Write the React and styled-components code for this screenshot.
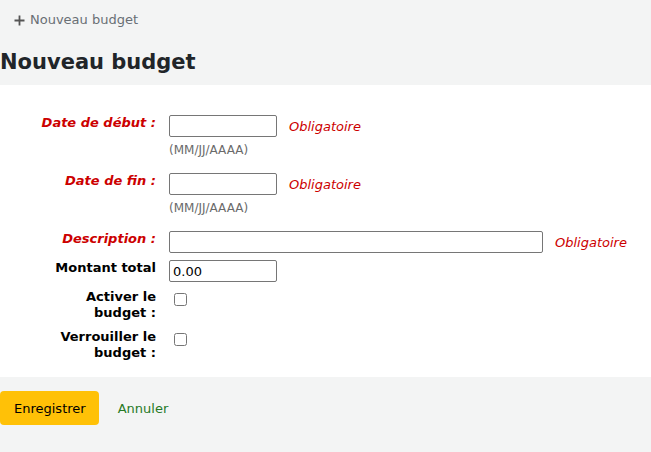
import React from "react";
import styled, { createGlobalStyle } from "styled-components";

const Global = createGlobalStyle`
  html, body { margin: 0; padding: 0; background: #f3f4f4; }
  body { font-family: "DejaVu Sans", "Liberation Sans", sans-serif; font-size: 13px; color: #000; }
`;

const Page = styled.div`
  width: 651px;
  min-height: 452px;
  background: #f3f4f4;
`;

const Toolbar = styled.div`
  display: flex;
  align-items: center;
  height: 38px;
  padding-left: 14px;
  padding-top: 1px;
`;

const ToolLink = styled.a`
  display: inline-flex;
  align-items: center;
  gap: 5px;
  color: #696f75;
  font-size: 13px;
  text-decoration: none;
  line-height: 16px;
`;

const Heading = styled.h1`
  margin: 0;
  padding: 10px 0 9px 0;
  font-size: 21px;
  line-height: 27px;
  font-weight: bold;
  color: #212529;
`;

const Panel = styled.div`
  background: #fff;
  padding: 30px 0 16px 0;
`;

const Row = styled.div`
  display: flex;
  align-items: flex-start;
  margin-bottom: ${(p) => p.$gap ?? 7}px;
  &:last-child { margin-bottom: 0; }
`;

const Label = styled.label`
  flex: none;
  width: 130px;
  margin-left: 26px;
  padding-right: 13px;
  text-align: right;
  font-weight: bold;
  line-height: 16px;
  color: ${(p) => (p.$required ? "#cc0000" : "#000")};
  font-style: ${(p) => (p.$required ? "italic" : "normal")};
`;

const Field = styled.div`
  display: flex;
  flex-direction: column;
`;

const Line = styled.div`
  display: flex;
  align-items: center;
`;

const Input = styled.input`
  box-sizing: border-box;
  width: ${(p) => p.$w}px;
  height: 22px;
  margin: 0;
  padding: 1px 3px;
  border: 1px solid #767676;
  border-radius: 2px;
  font-family: "DejaVu Sans", sans-serif;
  font-size: 13px;
  color: #000;
  background: #fff;
`;

const Required = styled.span`
  margin-left: 12px;
  color: #cc0000;
  font-style: italic;
  font-size: 13px;
`;

const Hint = styled.div`
  padding: 5px 0 8px 0;
  line-height: 16px;
  font-size: 12px;
  color: #6a6a6a;
`;

const Check = styled.input`
  flex: none;
  width: 13px;
  height: 13px;
  margin: 4px 0 0 5px;
`;

const Actions = styled.div`
  display: flex;
  align-items: center;
  gap: 19px;
  padding-top: 14px;
`;

const SaveButton = styled.button`
  height: 34px;
  padding: 0 13px 0 14px;
  border: none;
  border-radius: 4px;
  background: #ffc107;
  color: #000;
  font-family: "DejaVu Sans", sans-serif;
  font-size: 13px;
`;

const CancelLink = styled.a`
  color: #267a26;
  font-size: 13px;
  text-decoration: none;
`;

const Plus = () => (
  <svg width="11" height="11" viewBox="0 0 11 11">
    <path d="M5.5 0.5v10M0.5 5.5h10" stroke="#555" strokeWidth="1.8" fill="none" />
  </svg>
);

export default function App() {
  return (
    <Page>
      <Global />
      <Toolbar>
        <ToolLink href="#">
          <Plus />
          Nouveau budget
        </ToolLink>
      </Toolbar>
      <Heading>Nouveau budget</Heading>
      <Panel>
        <Row>
          <Label $required>Date de début&nbsp;:</Label>
          <Field>
            <Line>
              <Input $w={108} />
              <Required>Obligatoire</Required>
            </Line>
            <Hint>(MM/JJ/AAAA)</Hint>
          </Field>
        </Row>
        <Row>
          <Label $required>Date de fin&nbsp;:</Label>
          <Field>
            <Line>
              <Input $w={108} />
              <Required>Obligatoire</Required>
            </Line>
            <Hint>(MM/JJ/AAAA)</Hint>
          </Field>
        </Row>
        <Row>
          <Label $required>Description&nbsp;:</Label>
          <Field>
            <Line>
              <Input $w={374} />
              <Required>Obligatoire</Required>
            </Line>
          </Field>
        </Row>
        <Row>
          <Label>Montant total</Label>
          <Field>
            <Line>
              <Input $w={108} defaultValue="0.00" />
            </Line>
          </Field>
        </Row>
        <Row $gap={8}>
          <Label>Activer le budget&nbsp;:</Label>
          <Check type="checkbox" />
        </Row>
        <Row>
          <Label>Verrouiller le budget&nbsp;:</Label>
          <Check type="checkbox" />
        </Row>
      </Panel>
      <Actions>
        <SaveButton>Enregistrer</SaveButton>
        <CancelLink href="#">Annuler</CancelLink>
      </Actions>
    </Page>
  );
}
